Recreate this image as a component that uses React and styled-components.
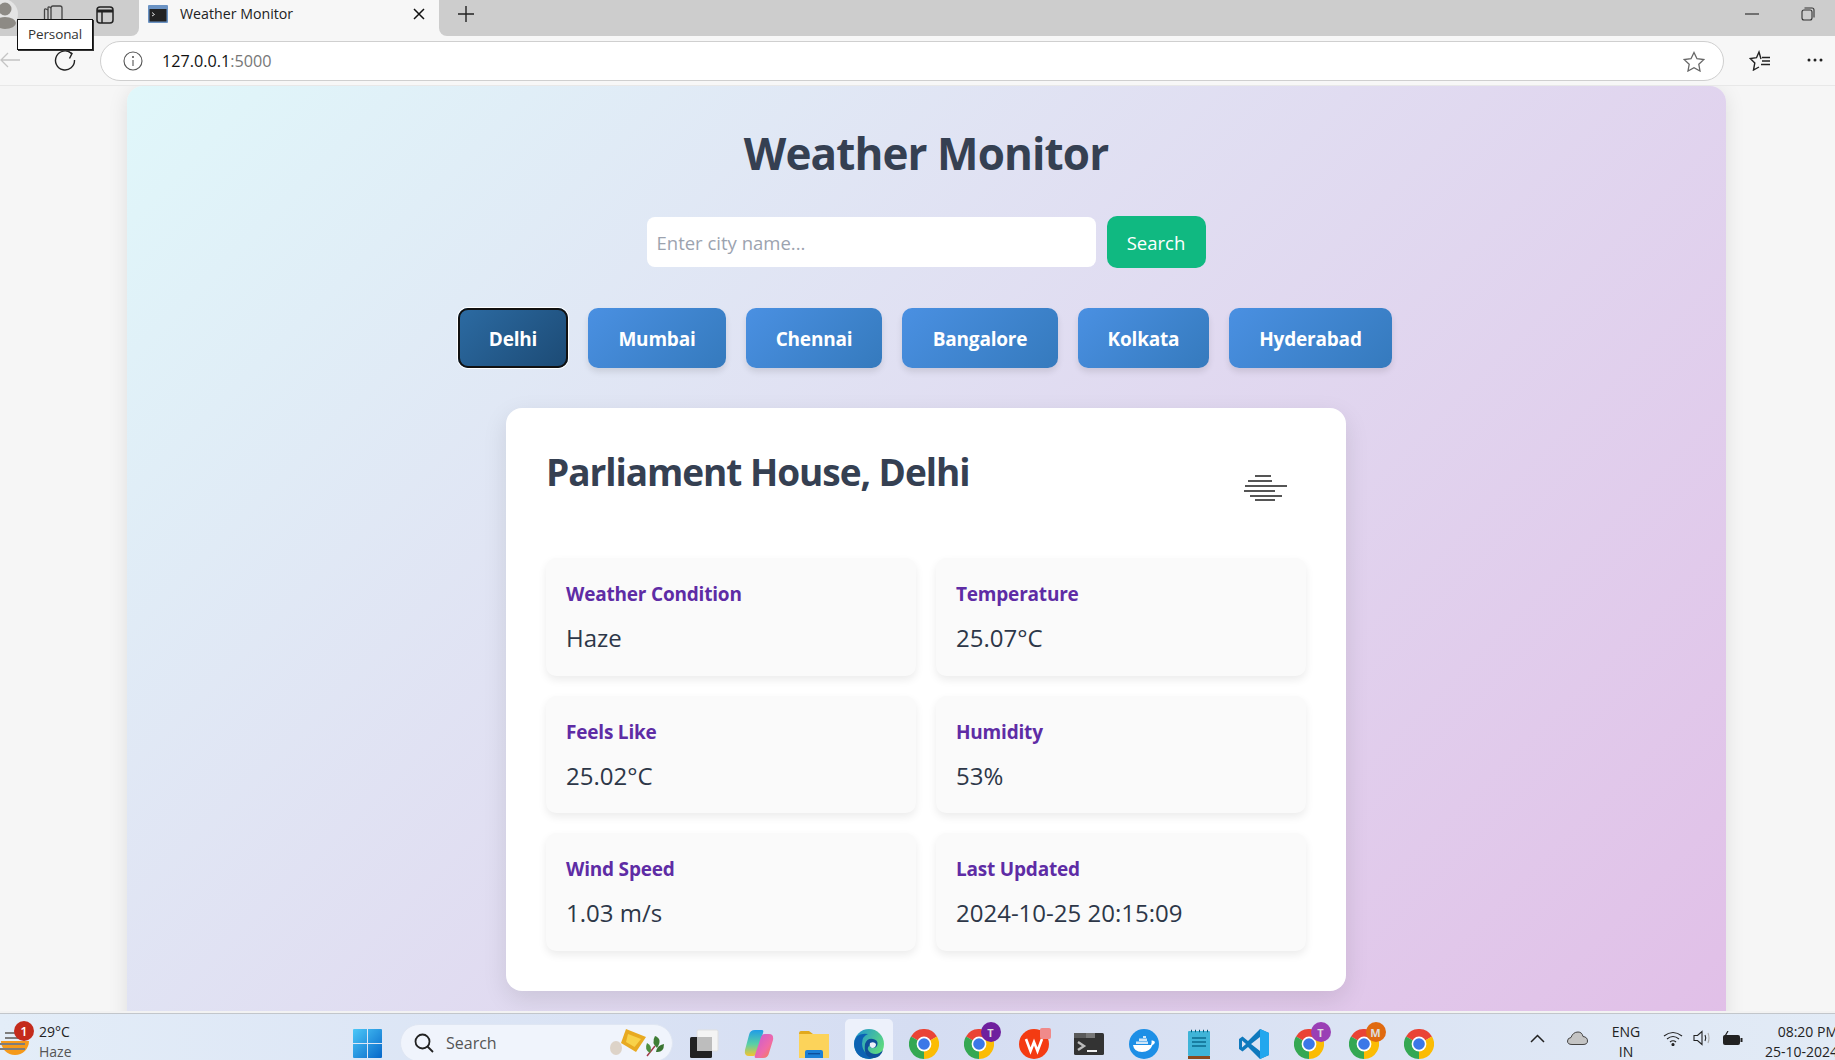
import React from "react";
import styled, { createGlobalStyle } from "styled-components";

const cities = [
  { name: "Delhi", width: 110, active: true },
  { name: "Mumbai", width: 138 },
  { name: "Chennai", width: 136 },
  { name: "Bangalore", width: 156 },
  { name: "Kolkata", width: 131 },
  { name: "Hyderabad", width: 163 },
];

const details = [
  { label: "Weather Condition", value: "Haze" },
  { label: "Temperature", value: "25.07°C" },
  { label: "Feels Like", value: "25.02°C" },
  { label: "Humidity", value: "53%" },
  { label: "Wind Speed", value: "1.03 m/s" },
  { label: "Last Updated", value: "2024-10-25 20:15:09" },
];

function Chrome({ badge, badgeColor }) {
  return (
    <AppSlot>
      <svg width="30" height="30" viewBox="0 0 30 30">
        <path d="M15 15 L2 7.5 A15 15 0 0 1 28 7.5 Z" fill="#ea4335" />
        <path d="M15 15 L28 7.5 A15 15 0 0 1 15 30 Z" fill="#fbbc04" />
        <path d="M15 15 L15 30 A15 15 0 0 1 2 7.5 Z" fill="#34a853" />
        <circle cx="15" cy="15" r="7.4" fill="#fff" />
        <circle cx="15" cy="15" r="5.8" fill="#3b78e7" />
      </svg>
      {badge && <AppBadge $color={badgeColor}>{badge}</AppBadge>}
    </AppSlot>
  );
}

function App() {
  return (
    <>
      <GlobalStyle />
      <Screen>
        <TabStrip>
          <ProfileArea>
            <svg width="20" height="32" viewBox="0 0 20 32">
              <circle cx="3" cy="14" r="15" fill="#e4e4e4" />
              <circle cx="5" cy="9" r="6.5" fill="#8d8a85" />
              <ellipse cx="5" cy="23" rx="11" ry="6" fill="#8d8a85" />
            </svg>
            <CollectionsIcon width="22" height="22" viewBox="0 0 22 22" fill="none" stroke="#444" strokeWidth="1.3">
              <rect x="9" y="3" width="11" height="17" rx="2" />
              <path d="M9 5 L7.5 4 Q6 3.5 6 5 V20 H9" />
              <path d="M6 7 L4 6 Q2.5 5.5 2.5 7 V19 Q2.5 20 4 20 H6" />
            </CollectionsIcon>
            <VerticalTabsIcon width="18" height="18" viewBox="0 0 18 18" fill="none" stroke="#222" strokeWidth="1.5">
              <rect x="1" y="1" width="16" height="16" rx="3" />
              <path d="M1 5 H17" strokeWidth="3" />
              <path d="M6 5 V17" />
            </VerticalTabsIcon>
          </ProfileArea>
          <ActiveTab>
            <svg width="20" height="18" viewBox="0 0 20 18">
              <rect width="20" height="18" rx="1" fill="#6b93c4" />
              <rect x="1.5" y="4" width="17" height="12.5" fill="#222" />
              <path d="M4 7.5 L6.5 9.5 L4 11" stroke="#ddd" fill="none" />
            </svg>
            <TabTitle>Weather Monitor</TabTitle>
            <svg width="12" height="12" viewBox="0 0 12 12" stroke="#111" strokeWidth="1.5">
              <path d="M1 1 L11 11 M11 1 L1 11" />
            </svg>
          </ActiveTab>
          <StripRest>
            <NewTab width="18" height="18" viewBox="0 0 18 18" stroke="#222" strokeWidth="1.4">
              <path d="M9 1 V17 M1 9 H17" />
            </NewTab>
            <WindowButtons>
              <svg width="14" height="2" viewBox="0 0 14 2" stroke="#333" strokeWidth="1.2">
                <path d="M0 1 H14" />
              </svg>
              <svg width="14" height="14" viewBox="0 0 14 14" fill="none" stroke="#333" strokeWidth="1.1">
                <rect x="1" y="3" width="10" height="10" rx="2" />
                <path d="M3.5 1 H11 Q13 1 13 3 V10.5" />
              </svg>
            </WindowButtons>
          </StripRest>
        </TabStrip>

        <Toolbar>
          <BackIcon width="20" height="16" viewBox="0 0 20 16" fill="none" stroke="#c4c4c4" strokeWidth="1.3">
            <path d="M8 1 L1 8 L8 15 M1 8 H20" />
          </BackIcon>
          <ReloadIcon width="22" height="22" viewBox="0 0 22 22" fill="none" stroke="#222" strokeWidth="1.4">
            <path d="M17.5 4.5 A9.5 9.5 0 1 0 20.5 11" />
            <path d="M12.5 1.5 L18 4.5 L15.5 9.5" />
          </ReloadIcon>
          <AddressBar>
            <svg width="20" height="20" viewBox="0 0 20 20" fill="none" stroke="#555" strokeWidth="1.1">
              <circle cx="10" cy="10" r="9" />
              <path d="M10 9 V15" />
              <circle cx="10" cy="6" r="0.5" />
            </svg>
            <Url>
              127.0.0.1<UrlPort>:5000</UrlPort>
            </Url>
            <svg width="22" height="21" viewBox="0 0 22 21" fill="none" stroke="#666" strokeWidth="1.3">
              <path d="M11 1.5 L14 7.7 L20.7 8.6 L15.8 13.3 L17 20 L11 16.8 L5 20 L6.2 13.3 L1.3 8.6 L8 7.7 Z" />
            </svg>
          </AddressBar>
          <FavouritesIcon width="22" height="21" viewBox="0 0 22 21" fill="none" stroke="#222" strokeWidth="1.4">
            <path d="M12 9 L10 2 L7.5 7.7 L1.3 8.6 L5.8 13 L4.5 20 L10 17" />
            <path d="M13 7.5 H21 M13 11 H21 M12 14.5 H21" />
          </FavouritesIcon>
          <MoreIcon width="16" height="4" viewBox="0 0 16 4" fill="#222">
            <circle cx="2" cy="2" r="1.5" />
            <circle cx="8" cy="2" r="1.5" />
            <circle cx="14" cy="2" r="1.5" />
          </MoreIcon>
        </Toolbar>

        <Viewport>
          <Container>
            <Title>Weather Monitor</Title>
            <SearchRow>
              <CityInput placeholder="Enter city name..." />
              <SearchButton>Search</SearchButton>
            </SearchRow>
            <CityRow>
              {cities.map((city) => (
                <CityButton key={city.name} $width={city.width} $active={city.active}>
                  {city.name}
                </CityButton>
              ))}
            </CityRow>
            <Card>
              <CardHeader>
                <CardTitle>Parliament House, Delhi</CardTitle>
                <svg width="43" height="26" viewBox="0 0 43 26" stroke="#555" strokeWidth="2.2">
                  <path d="M11 1 H27 M4 6 H28 M1 11 H43 M0 16 H31 M6 21 H38 M11 25 H31" />
                </svg>
              </CardHeader>
              <DetailGrid>
                {details.map((item) => (
                  <DetailItem key={item.label}>
                    <DetailLabel>{item.label}</DetailLabel>
                    <DetailValue>{item.value}</DetailValue>
                  </DetailItem>
                ))}
              </DetailGrid>
            </Card>
          </Container>
        </Viewport>

        <Taskbar>
          <WeatherWidget>
            <WeatherIcon width="30" height="30" viewBox="0 0 30 30">
              <path d="M1 12 H29 A14 14 0 0 1 1 12 Z" fill="#f59a1b" />
              <path d="M5 4 H15 M5 9 H25 M0 15 H25 M0 20 H25" stroke="#7d7d7d" strokeWidth="2.2" />
            </WeatherIcon>
            <WeatherBadge>1</WeatherBadge>
            <TwoLines>
              <Line>29°C</Line>
              <Line $muted>Haze</Line>
            </TwoLines>
          </WeatherWidget>
          <StartIcon width="29" height="29" viewBox="0 0 29 29">
            <defs>
              <linearGradient id="win" x1="0" y1="0" x2="1" y2="1">
                <stop offset="0" stopColor="#4cc8f8" />
                <stop offset="1" stopColor="#0667c9" />
              </linearGradient>
            </defs>
            <path d="M0 1 Q0 0 1 0 H14 V14 H0 Z M15 0 H28 Q29 0 29 1 V14 H15 Z M0 15 H14 V29 H1 Q0 29 0 28 Z M15 15 H29 V28 Q29 29 28 29 H15 Z" fill="url(#win)" />
          </StartIcon>
          <SearchPill>
            <svg width="20" height="20" viewBox="0 0 20 20" fill="none" stroke="#222" strokeWidth="1.8">
              <circle cx="8.5" cy="8.5" r="7" />
              <path d="M13.5 13.5 L19 19" />
            </svg>
            <SearchLabel>Search</SearchLabel>
            <svg width="56" height="34" viewBox="0 0 56 34">
              <ellipse cx="7" cy="22" rx="6" ry="7" fill="#ddd3c8" />
              <path d="M17 3 L37 11 L27 26 L12 17 Z" fill="#e8aa22" />
              <path d="M19 8 L32 13 L25.500 21 L17 16 Z" fill="#f8d24a" />
              <path d="M38 30 L46 20" stroke="#a33a4a" strokeWidth="1.5" fill="none" />
              <path d="M46 10 Q54 13 48 22 Q42 17 46 10 Z" fill="#3f7d36" />
              <path d="M38 17 Q44 20 41 27 Q35 24 38 17 Z" fill="#4d8f3f" />
              <path d="M55 18 Q55 27 47 26 Q48 19 55 18 Z" fill="#3a7431" />
            </svg>
          </SearchPill>
          <AppRow>
            <AppSlot>
              <svg width="30" height="30" viewBox="0 0 30 30">
                <rect x="8" y="1" width="21" height="21" rx="1.5" fill="#f4f4f4" stroke="#e0e0e0" />
                <rect x="1" y="8" width="22" height="21" rx="1.5" fill="#222" />
                <rect x="8" y="8" width="15" height="14" fill="#bdbdbd" />
              </svg>
            </AppSlot>
            <AppSlot>
              <svg width="30" height="30" viewBox="0 0 30 30">
                <defs>
                  <linearGradient id="cp1" x1="0" y1="0" x2="0" y2="1">
                    <stop offset="0" stopColor="#1f9ce8" />
                    <stop offset="0.55" stopColor="#5ad0a5" />
                    <stop offset="1" stopColor="#f4c430" />
                  </linearGradient>
                  <linearGradient id="cp2" x1="0" y1="0" x2="1" y2="1">
                    <stop offset="0" stopColor="#c25bd9" />
                    <stop offset="0.6" stopColor="#f06aa8" />
                    <stop offset="1" stopColor="#f5853f" />
                  </linearGradient>
                </defs>
                <path d="M11 1 H18 Q20 1 19 4 L13 24 Q12 27 9 27 H5 Q0 27 1 21 L5 6 Q6 1 11 1 Z" fill="url(#cp1)" />
                <path d="M19 29 H12 Q10 29 11 26 L17 8 Q18 5 21 5 H25 Q30 5 29 11 L25 24 Q24 29 19 29 Z" fill="url(#cp2)" />
              </svg>
            </AppSlot>
            <AppSlot>
              <svg width="30" height="30" viewBox="0 0 30 30">
                <path d="M0 5 Q0 2 2 2 H10 L14 5 H30 V29 H0 Z" fill="#e2a91c" />
                <rect y="5" width="30" height="24" fill="#fcd35a" />
                <path d="M6 23 Q6 21 8 21 H22 Q24 21 24 23 V29 H6 Z" fill="#1b80d6" />
                <rect x="9" y="24" width="12" height="1.4" fill="#0b4f9c" />
              </svg>
            </AppSlot>
            <AppSlot $highlight>
              <svg width="30" height="30" viewBox="0 0 30 30">
                <defs>
                  <linearGradient id="edgeA" x1="0" y1="0" x2="1" y2="0.6">
                    <stop offset="0" stopColor="#1b8fd6" />
                    <stop offset="1" stopColor="#5fdb7e" />
                  </linearGradient>
                </defs>
                <circle cx="15" cy="15" r="15" fill="url(#edgeA)" />
                <path d="M0 15 Q1 3 14 5 Q8 7 8 15 Q9 27 22 28 Q17 30 15 30 Q1 29 0 15 Z" fill="#0c62b3" />
                <path d="M11 15 Q13 9 19 10 Q24 11 23.5 15 Q23 19 19 19 Q15 19 16 16 Q11 20 17 24 Q24 27 29 21 Q27 28 20 29 Q9 29 11 15 Z" fill="#0e4f9a" />
                <path d="M16 14 Q20 12 22 15 Q22 19 18 19 Q15 18 16 14 Z" fill="#edf1fb" />
              </svg>
            </AppSlot>
            <Chrome />
            <Chrome badge="T" badgeColor="#6f1f9e" />
            <AppSlot>
              <svg width="30" height="30" viewBox="0 0 30 30">
                <circle cx="15" cy="15" r="15" fill="#f43b12" />
                <path d="M7 10 L11.5 22 L15 13 L18.5 22 L23 10" fill="none" stroke="#fff" strokeWidth="2.6" />
              </svg>
              <WpsBadge />
            </AppSlot>
            <AppSlot>
              <svg width="30" height="22" viewBox="0 0 30 22">
                <rect width="30" height="22" rx="1.5" fill="#333" />
                <rect width="12" height="5" fill="#5a5a5a" />
                <rect x="12" width="9" height="5" fill="#777" />
                <path d="M4 9 L10 13 L4 17" fill="none" stroke="#bbb" strokeWidth="2.4" />
                <path d="M13 18 H23" stroke="#eee" strokeWidth="2" />
              </svg>
            </AppSlot>
            <AppSlot>
              <svg width="30" height="30" viewBox="0 0 30 30">
                <circle cx="15" cy="15" r="15" fill="#1d8fe6" />
                <path d="M4 16 H22 Q23 13 22.5 11.5 Q25 11 26 13 Q25.5 15.5 23.5 16 Q21 23 13 23 Q5 23 4 16 Z" fill="#fff" />
                <path d="M7 12.5 H19 V15 H7 Z M10 9.5 H18 V12 H10 Z M14 7 H17 V9 H14 Z" fill="#cfe6f8" />
              </svg>
            </AppSlot>
            <AppSlot>
              <svg width="22" height="30" viewBox="0 0 22 30">
                <rect y="2" width="22" height="25" rx="1" fill="#3fb4d8" />
                <path d="M4 9 H18 M4 13 H18 M4 17 H18" stroke="#0c6b8e" strokeWidth="1.5" />
                <path d="M3 2 H4 M7 2 H8 M11 2 H12 M15 2 H16 M19 2 H20" stroke="#0a5a78" strokeWidth="2.5" />
                <rect y="27" width="22" height="3" fill="#8c4a1f" />
              </svg>
            </AppSlot>
            <AppSlot>
              <svg width="30" height="30" viewBox="0 0 30 30">
                <path d="M21 0 L30 4 V26 L21 30 L9 18 L3.5 22.5 L0 20 V10 L3.5 7.5 L9 12 Z" fill="#0f79bd" />
                <path d="M21 0 L30 4 V26 L21 30 Z" fill="#22a7ee" />
                <path d="M21 8 L12 15 L21 22 Z M3 11.5 L7 15 L3 18.5 Z" fill="#dbe3f4" />
              </svg>
            </AppSlot>
            <Chrome badge="T" badgeColor="#9a3fb5" />
            <Chrome badge="M" badgeColor="#e06a10" />
            <Chrome />
          </AppRow>
          <Tray>
            <svg width="15" height="9" viewBox="0 0 15 9" fill="none" stroke="#222" strokeWidth="1.5">
              <path d="M1 8 L7.5 1.5 L14 8" />
            </svg>
            <svg width="21" height="14" viewBox="0 0 21 14">
              <path d="M5 13.5 Q0.5 13.5 0.5 10 Q0.5 7 4 6.5 Q6 1 11 1 Q15 1 16 5.5 Q20.5 6 20.5 10 Q20.5 13.5 16 13.5 Z" fill="#c4c4c4" stroke="#444" />
            </svg>
            <LangBox>
              <Line>ENG</Line>
              <Line>IN</Line>
            </LangBox>
            <TrayIcons>
              <svg width="20" height="15" viewBox="0 0 20 15" fill="none" stroke="#222" strokeWidth="1.2">
                <path d="M1 5 Q10 -2 19 5 M4 8 Q10 3 16 8 M7 11 Q10 8.5 13 11" />
                <circle cx="10" cy="13.5" r="1" fill="#222" />
              </svg>
              <svg width="19" height="16" viewBox="0 0 19 16" fill="none" stroke="#222" strokeWidth="1.1">
                <path d="M1 5.5 H4.5 L9 1.5 V14.5 L4.5 10.5 H1 Z" />
                <path d="M12 5 Q13.5 8 12 11" />
                <path d="M15 3 Q17 8 15 13" stroke="#aaa" />
              </svg>
              <svg width="21" height="15" viewBox="0 0 21 15">
                <rect x="1" y="4" width="17" height="10" rx="2" fill="#222" />
                <rect x="18.5" y="7" width="2" height="4" fill="#222" />
                <path d="M6 0 L2 7 H6 L4 11" fill="none" stroke="#222" strokeWidth="1.2" />
              </svg>
            </TrayIcons>
            <Clock>
              <Line>08:20 PM</Line>
              <Line>25-10-2024</Line>
            </Clock>
          </Tray>
        </Taskbar>

        <Tooltip>Personal</Tooltip>
      </Screen>
    </>
  );
}

export default App;

const GlobalStyle = createGlobalStyle`
  html, body {
    margin: 0;
    padding: 0;
    height: 100%;
    overflow: hidden;
    font-family: "Open Sans", "Noto Sans", sans-serif;
  }
`;

const Screen = styled.div`
  position: relative;
  display: flex;
  flex-direction: column;
  width: 1835px;
  height: 1060px;
  overflow: hidden;
  background: #f6f6f6;
`;

const TabStrip = styled.div`
  display: flex;
  height: 36px;
  background: #f7f7f7;
  flex-shrink: 0;
`;

const ProfileArea = styled.div`
  display: flex;
  align-items: flex-start;
  width: 139px;
  height: 36px;
  background: #cdcdcd;
  border-radius: 0 0 8px 0;
  flex-shrink: 0;
`;

const CollectionsIcon = styled.svg`
  margin: 3px 0 0 22px;
`;

const VerticalTabsIcon = styled.svg`
  margin: 6px 0 0 32px;
`;

const ActiveTab = styled.div`
  display: flex;
  align-items: center;
  width: 300px;
  height: 36px;
  padding: 0 14px 8px 9px;
  box-sizing: border-box;
`;

const TabTitle = styled.span`
  flex: 1;
  margin: 0 0 2px 12px;
  font-size: 14.2px;
  color: #222;
`;

const StripRest = styled.div`
  display: flex;
  align-items: flex-start;
  flex: 1;
  background: #cdcdcd;
  border-radius: 0 0 0 8px;
`;

const NewTab = styled.svg`
  margin: 5px 0 0 18px;
`;

const WindowButtons = styled.div`
  display: flex;
  align-items: center;
  gap: 42px;
  height: 28px;
  margin-left: auto;
  padding-right: 20px;
`;

const Toolbar = styled.div`
  display: flex;
  align-items: center;
  height: 50px;
  padding-top: 1px;
  box-sizing: border-box;
  background: #f7f7f7;
  border-bottom: 1px solid #e8e8e8;
  flex-shrink: 0;
`;

const BackIcon = styled.svg`
  margin-bottom: 2px;
  flex-shrink: 0;
`;

const ReloadIcon = styled.svg`
  margin: 0 0 2px 34px;
  flex-shrink: 0;
`;

const AddressBar = styled.div`
  display: flex;
  align-items: center;
  width: 1624px;
  height: 40px;
  margin-left: 24px;
  padding: 0 18px 0 22px;
  box-sizing: border-box;
  background: #fff;
  border: 1px solid #cfcfcf;
  border-radius: 20px;
`;

const Url = styled.div`
  flex: 1;
  margin-left: 19px;
  font-size: 16.2px;
  color: #111;
`;

const UrlPort = styled.span`
  color: #777;
`;

const FavouritesIcon = styled.svg`
  margin: 0 0 2px 25px;
`;

const MoreIcon = styled.svg`
  margin: 0 0 2px 36px;
`;

const Viewport = styled.div`
  flex: 1;
  min-height: 0;
  overflow: hidden;
  background: #f6f6f6;
`;

const Container = styled.div`
  display: flex;
  flex-direction: column;
  align-items: center;
  width: 1599px;
  margin-left: 127px;
  padding: 35px 1px 90px 0;
  box-sizing: border-box;
  background: linear-gradient(135deg, #e0f7fa, #e1bee7);
  border-radius: 16px;
  box-shadow: 0 4px 20px rgba(0, 0, 0, 0.1);
`;

const Title = styled.h1`
  margin: 0;
  font-size: 44px;
  line-height: 64px;
  font-weight: 700;
  letter-spacing: -0.9px;
  color: #354052;
`;

const SearchRow = styled.div`
  display: flex;
  align-items: center;
  gap: 11px;
  margin-top: 31px;
`;

const CityInput = styled.input`
  width: 449px;
  height: 50px;
  padding: 0 10px;
  box-sizing: border-box;
  border: none;
  border-radius: 8px;
  background: #fff;
  font-family: inherit;
  font-size: 18.5px;
  outline: none;

  &::placeholder {
    color: #9ca3af;
  }
`;

const SearchButton = styled.button`
  width: 99px;
  height: 52px;
  padding: 0;
  border: none;
  border-radius: 10px;
  background: #10b981;
  color: #fff;
  font-family: inherit;
  font-size: 18.5px;
`;

const CityRow = styled.div`
  display: flex;
  align-items: center;
  gap: 20px;
  margin-top: 40px;
  padding-right: 2px;
`;

const CityButton = styled.button`
  width: ${(p) => p.$width}px;
  height: 60px;
  padding: 2px 0 0;
  border: none;
  border-radius: 10px;
  background: ${(p) =>
    p.$active
      ? "linear-gradient(135deg, #2c6ba3, #1c4a74)"
      : "linear-gradient(135deg, #4a90e2, #357abd)"};
  box-shadow: ${(p) =>
    p.$active
      ? "inset 0 0 0 2px #111, 0 0 0 1px #fff"
      : "0 4px 6px rgba(0, 0, 0, 0.1)"};
  color: #fff;
  font-family: inherit;
  font-size: 19px;
  font-weight: 700;
  letter-spacing: -0.2px;
`;

const Card = styled.div`
  width: 840px;
  margin-top: 40px;
  padding: 40px;
  box-sizing: border-box;
  background: #fff;
  border-radius: 16px;
  box-shadow: 0 8px 24px rgba(0, 0, 0, 0.1);
`;

const CardHeader = styled.div`
  display: flex;
  align-items: flex-start;
  justify-content: space-between;
  height: 110px;
  padding-right: 19px;

  svg {
    margin-top: 27px;
  }
`;

const CardTitle = styled.h2`
  margin: 0;
  font-size: 37px;
  line-height: 48px;
  font-weight: 700;
  letter-spacing: -1.05px;
  color: #354052;
`;

const DetailGrid = styled.div`
  display: grid;
  grid-template-columns: 370px 370px;
  gap: 20px;
`;

const DetailItem = styled.div`
  height: 117.5px;
  padding: 23px 20px 0;
  box-sizing: border-box;
  background: #fafafa;
  border-radius: 10px;
  box-shadow: 0 4px 8px rgba(0, 0, 0, 0.08);
`;

const DetailLabel = styled.div`
  font-size: 19px;
  line-height: 26px;
  font-weight: 700;
  letter-spacing: -0.2px;
  color: #5e2ca5;
`;

const DetailValue = styled.div`
  margin-top: 15px;
  font-size: 24px;
  line-height: 32px;
  color: #2d3748;
`;

const Taskbar = styled.div`
  display: flex;
  align-items: flex-start;
  height: 49px;
  padding-top: 3px;
  box-sizing: border-box;
  border-top: 2px solid #f2f2f2;
  box-shadow: inset 0 1px 0 #c2c6cb;
  background: linear-gradient(90deg, #e3edf8, #d5ddf2 50%, #e2ebf6);
  overflow: hidden;
  flex-shrink: 0;
  font-size: 14px;
  color: #222;
`;

const WeatherWidget = styled.div`
  position: relative;
  display: flex;
  width: 353px;
  padding-left: 39px;
  box-sizing: border-box;
  flex-shrink: 0;
`;

const WeatherIcon = styled.svg`
  position: absolute;
  left: 0;
  top: 13px;
`;

const WeatherBadge = styled.div`
  position: absolute;
  left: 14px;
  top: 5px;
  display: flex;
  align-items: center;
  justify-content: center;
  width: 20px;
  height: 20px;
  border-radius: 50%;
  background: #c42b1c;
  color: #fff;
  font-size: 13px;
  font-weight: 600;
`;

const TwoLines = styled.div`
  display: flex;
  flex-direction: column;
  margin-top: 6px;
`;

const Line = styled.div`
  height: 20px;
  line-height: 20px;
  font-size: 14px;
  white-space: nowrap;
  color: ${(p) => (p.$muted ? "#555" : "#222")};
`;

const StartIcon = styled.svg`
  margin-top: 13px;
  flex-shrink: 0;
`;

const SearchPill = styled.div`
  display: flex;
  align-items: center;
  width: 273px;
  height: 38px;
  margin: 8px 0 0 18px;
  padding: 0 7px 0 13px;
  box-sizing: border-box;
  background: #f0f4fc;
  border: 1px solid #dfe6f3;
  border-radius: 19px;
  flex-shrink: 0;
`;

const SearchLabel = styled.span`
  flex: 1;
  margin-left: 12px;
  font-size: 16px;
  color: #555;
`;

const AppRow = styled.div`
  display: flex;
  margin-left: 3px;
  flex-shrink: 0;
`;

const AppSlot = styled.div`
  position: relative;
  display: flex;
  align-items: center;
  justify-content: center;
  width: ${(p) => (p.$highlight ? "48px" : "30px")};
  height: 41px;
  margin: ${(p) => (p.$highlight ? "3px 3.5px 0" : "3px 12.5px 0")};
  padding-top: 9px;
  box-sizing: border-box;
  background: ${(p) => (p.$highlight ? "#edf1fb" : "transparent")};
  border-radius: 5px 5px 0 0;
  flex-shrink: 0;
`;

const AppBadge = styled.div`
  position: absolute;
  top: 3px;
  right: -7px;
  display: flex;
  align-items: center;
  justify-content: center;
  width: 20px;
  height: 20px;
  border-radius: 50%;
  background: ${(p) => p.$color};
  color: #ddd;
  font-size: 11px;
  font-weight: 700;
`;

const WpsBadge = styled.div`
  position: absolute;
  top: 9px;
  right: -2px;
  width: 11px;
  height: 11px;
  border-radius: 2px;
  background: #f08a8a;
`;

const Tray = styled.div`
  display: flex;
  align-items: center;
  height: 44px;
  margin-left: 84px;
  flex-shrink: 0;

  > svg:nth-child(2) {
    margin-left: 22px;
  }
`;

const LangBox = styled.div`
  display: flex;
  flex-direction: column;
  align-items: center;
  width: 40px;
  margin: 8px 0 0 18px;
`;

const TrayIcons = styled.div`
  display: flex;
  align-items: center;
  gap: 10px;
  margin-left: 17px;
`;

const Clock = styled.div`
  display: flex;
  flex-direction: column;
  align-items: flex-end;
  width: 76px;
  margin: 8px 0 0 19px;
`;

const Tooltip = styled.div`
  position: absolute;
  left: 17px;
  top: 19px;
  display: flex;
  align-items: center;
  justify-content: center;
  width: 76px;
  height: 31px;
  padding-bottom: 2px;
  box-sizing: border-box;
  background: #fff;
  border: 1px solid #111;
  box-shadow: 1px 1px 0 #333;
  font-size: 13.5px;
  letter-spacing: -0.1px;
  color: #333;
`;
